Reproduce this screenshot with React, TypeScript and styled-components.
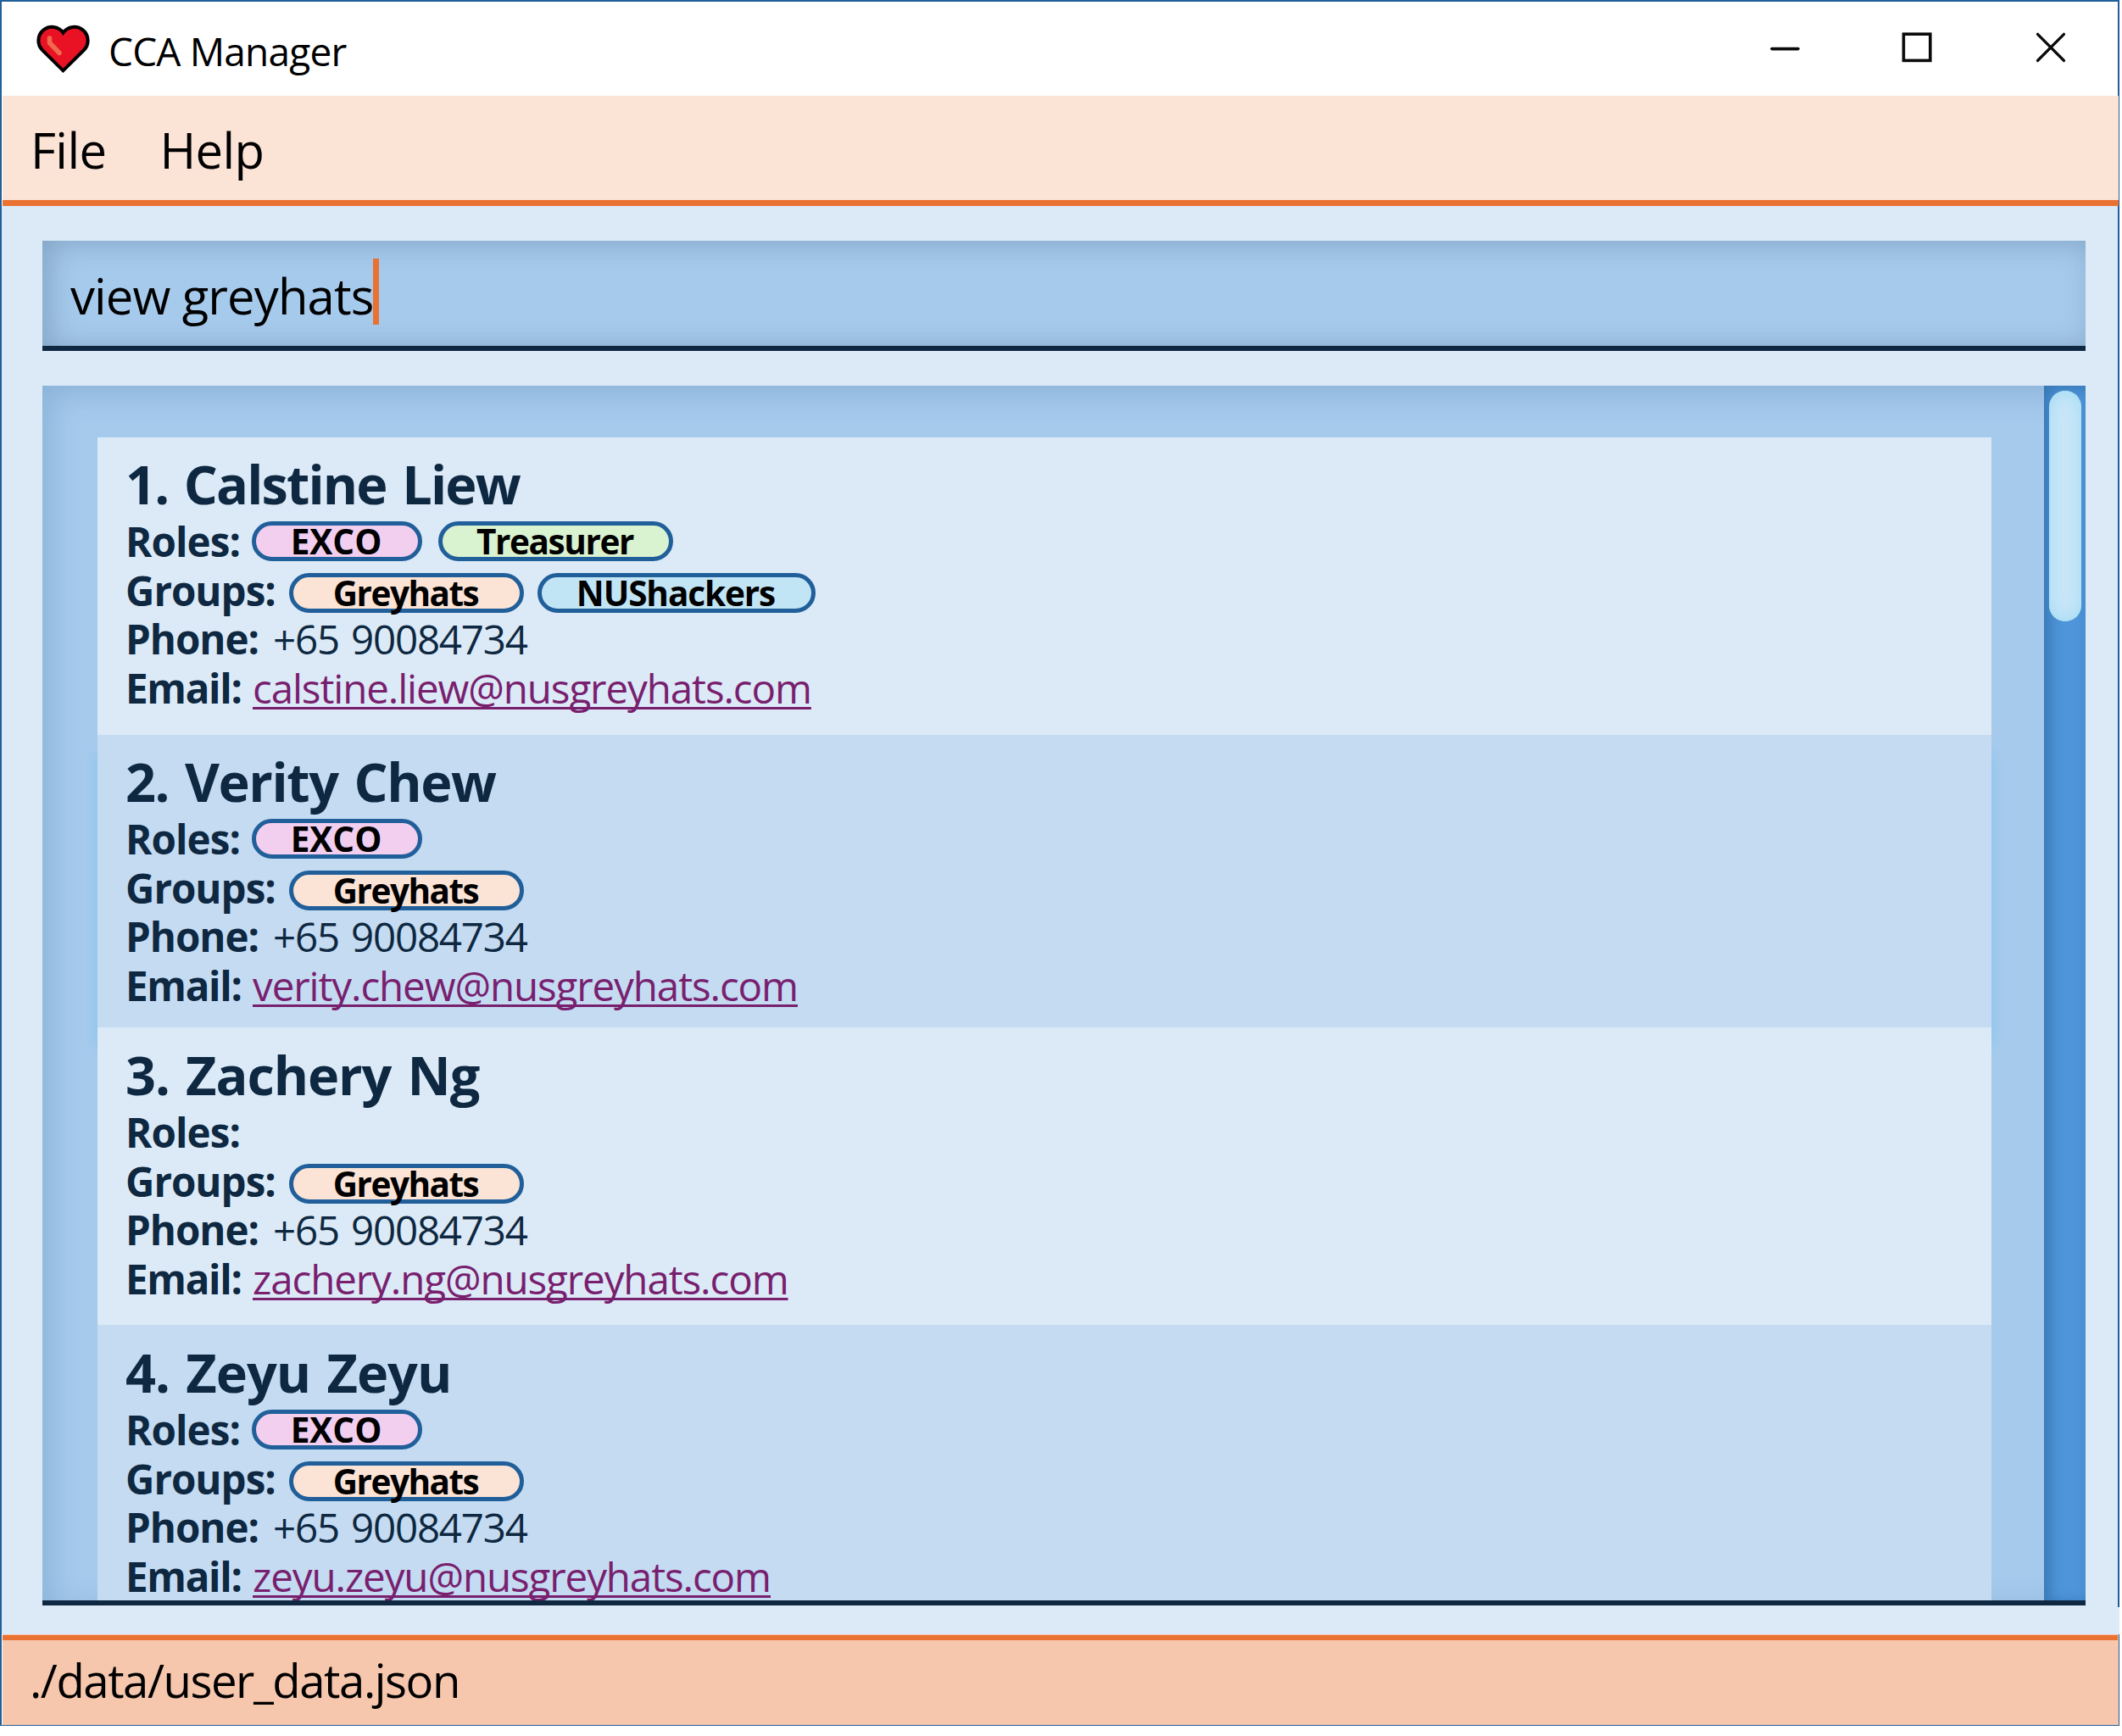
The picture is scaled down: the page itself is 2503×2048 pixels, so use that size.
import React from "react";
import styled, { createGlobalStyle } from "styled-components";

const GlobalStyle = createGlobalStyle`
  *, *::before, *::after { box-sizing: border-box; }
  body { margin: 0; background: #ffffff; font-family: "Open Sans", "Noto Sans", sans-serif; }
`;

const Window = styled.div`
  display: flex;
  flex-direction: column;
  width: 2500px;
  height: 2036px;
  border: 2px solid #215f9a;
  border-bottom-width: 1px;
  background: #ffffff;
  color: #000000;
  white-space: pre;
`;

const TitleBar = styled.header`
  display: flex;
  height: 111px;
  flex: none;
`;

const HeartIcon = styled.svg`
  flex: none;
  width: 64px;
  height: 60px;
  margin: 26px 0 0 40px;
`;

const Title = styled.h1`
  flex: 1;
  margin: 0 0 0 22px;
  padding-top: 3px;
  font-size: 46px;
  font-weight: 400;
  line-height: 111px;
  letter-spacing: -0.8px;
`;

const WindowControls = styled.div`
  display: flex;
  align-items: flex-start;
  gap: 118px;
  padding: 34px 59px 0 0;
`;

const ControlIcon = styled.svg`
  display: block;
  width: 40px;
  height: 40px;
  fill: none;
  stroke: #0a0a0a;
  stroke-linecap: round;
`;

const MenuBar = styled.nav`
  display: flex;
  flex: none;
  gap: 63px;
  height: 130px;
  margin: 0 -1px 0 1px;
  padding-left: 33px;
  border-bottom: 7px solid #e97132;
  background: #fbe3d6;
`;

const MenuItem = styled.span`
  font-size: 58px;
  line-height: 127px;
  letter-spacing: -0.6px;
`;

const Main = styled.main`
  display: flex;
  flex: none;
  flex-direction: column;
  gap: 41px;
  height: 1653px;
  padding: 41px 38px 0 48px;
  background: #dceaf7;
`;

const CommandBox = styled.div`
  display: flex;
  flex: none;
  height: 130px;
  padding-left: 33px;
  border-bottom: 6px solid #0e2841;
  background: #a6caec;
  box-shadow: inset 9px 3px 34px rgba(20, 50, 80, 0.24);
`;

const CommandText = styled.span`
  font-size: 58px;
  line-height: 129px;
  letter-spacing: -0.9px;
`;

const Caret = styled.span`
  width: 7px;
  height: 78px;
  margin-top: 21px;
  background: #e97132;
`;

const ListPanel = styled.section`
  display: flex;
  flex: none;
  height: 1439px;
  border-bottom: 6px solid #0e2841;
  background: #a6caec;
  box-shadow: inset 9px 9px 36px rgba(40, 90, 140, 0.21);
`;

const CardList = styled.div`
  display: flex;
  flex: 1;
  flex-direction: column;
  padding: 61px 62px 0 65px;
  overflow: hidden;
`;

const Card = styled.article<{ $height: number; $shade: boolean; $top: number; $glow: boolean }>`
  position: relative;
  z-index: ${(p) => (p.$glow ? 0 : 1)};
  flex: none;
  height: ${(p) => p.$height}px;
  padding: ${(p) => p.$top}px 0 0 33px;
  background: ${(p) => (p.$shade ? "#c4dbf2" : "#dceaf7")};
  box-shadow: ${(p) => (p.$glow ? "0 22px 16px #84c6ee" : "none")};
  color: #0e2841;
`;

const Name = styled.h2<{ $spacing: number }>`
  height: 77px;
  margin: 0;
  font-size: 63px;
  font-weight: 700;
  line-height: 77px;
  letter-spacing: ${(p) => p.$spacing}px;
  word-spacing: 4px;
`;

const Field = styled.div<{ $height: number }>`
  display: flex;
  height: ${(p) => p.$height}px;
  font-size: 47.5px;
  line-height: 60px;
`;

const Label = styled.span<{ $width: number; $spacing: number }>`
  flex: none;
  width: ${(p) => p.$width}px;
  font-weight: 700;
  letter-spacing: ${(p) => p.$spacing}px;
`;

const Value = styled.span`
  letter-spacing: -1.2px;
  word-spacing: 3px;
`;

const MailLink = styled.a`
  color: #78206e;
  letter-spacing: -1.09px;
  text-decoration: underline;
  text-decoration-thickness: 3px;
  text-decoration-skip-ink: none;
  text-underline-offset: 4px;
`;

const Tags = styled.div<{ $gap: number; $drop: number }>`
  display: flex;
  gap: ${(p) => p.$gap}px;
  padding-top: ${(p) => p.$drop}px;
`;

const Tag = styled.span<{ $color: string; $width: number; $spacing: number }>`
  width: ${(p) => p.$width}px;
  height: 47px;
  padding-right: 2px;
  border: 5px solid #215f9a;
  border-radius: 24px;
  background: ${(p) => p.$color};
  color: #000000;
  font-size: 40.5px;
  font-weight: 700;
  line-height: 37px;
  letter-spacing: ${(p) => p.$spacing}px;
  text-align: center;
`;

const ScrollBar = styled.div`
  flex: none;
  width: 49px;
  padding: 6px 5px 0 6px;
  background: #4e95d9;
  box-shadow: inset 6px 3px 16px rgba(20, 70, 120, 0.4);
`;

const Thumb = styled.div`
  height: 272px;
  border-radius: 19px;
  background: #cce6f9;
  box-shadow: inset 0 0 22px #9cdcf2;
`;

const Divider = styled.div`
  flex: 1;
  margin-right: -2px;
  background: #dceaf7;
`;

const StatusBar = styled.footer`
  flex: none;
  height: 107px;
  margin: 0 -1px 0 1px;
  padding-left: 32px;
  border-top: 1px solid #f6c6ad;
  background: #f6c6ad;
`;

const StatusRule = styled.div`
  height: 6px;
  margin: 0 1px 0 -32px;
  background: #e97132;
`;

const StatusText = styled.span`
  display: block;
  font-size: 54.5px;
  line-height: 94px;
  letter-spacing: -1.45px;
`;

const TAGS: Record<string, { color: string; width: number; spacing: number }> = {
  EXCO: { color: "#f2ceef", width: 201, spacing: 0 },
  Treasurer: { color: "#d9f2d0", width: 277, spacing: -1.4 },
  Greyhats: { color: "#fbe3d6", width: 277, spacing: -1.5 },
  NUShackers: { color: "#c1e5f5", width: 328, spacing: -1.1 },
};

type Person = {
  name: string;
  spacing: number;
  roles: string[];
  groups: string[];
  phone: string;
  email: string;
  height: number;
  top: number;
};

const PEOPLE: Person[] = [
  { name: "Calstine Liew", spacing: -1.87, roles: ["EXCO", "Treasurer"], groups: ["Greyhats", "NUShackers"], phone: "+65 90084734", email: "calstine.liew@nusgreyhats.com", height: 351, top: 16 },
  { name: "Verity Chew", spacing: -1.44, roles: ["EXCO"], groups: ["Greyhats"], phone: "+65 90084734", email: "verity.chew@nusgreyhats.com", height: 345, top: 16 },
  { name: "Zachery Ng", spacing: -1.1, roles: [], groups: ["Greyhats"], phone: "+65 90084734", email: "zachery.ng@nusgreyhats.com", height: 351, top: 17 },
  { name: "Zeyu Zeyu", spacing: -1.03, roles: ["EXCO"], groups: ["Greyhats"], phone: "+65 90084734", email: "zeyu.zeyu@nusgreyhats.com", height: 351, top: 17 },
];

function TagList({ items, gap, drop }: { items: string[]; gap: number; drop: number }) {
  return (
    <Tags $gap={gap} $drop={drop}>
      {items.map((t) => (
        <Tag key={t} $color={TAGS[t].color} $width={TAGS[t].width} $spacing={TAGS[t].spacing}>{t}</Tag>
      ))}
    </Tags>
  );
}

function PersonCard({ person, index }: { person: Person; index: number }) {
  return (
    <Card $height={person.height} $top={person.top} $shade={index % 2 === 1} $glow={index === 1}>
      <Name $spacing={person.spacing}>{`${index + 1}. ${person.name}`}</Name>
      <Field $height={58}>
        <Label $width={149} $spacing={-0.9}>Roles:</Label>
        <TagList items={person.roles} gap={19} drop={6} />
      </Field>
      <Field $height={57}>
        <Label $width={193} $spacing={-1}>Groups:</Label>
        <TagList items={person.groups} gap={16} drop={9} />
      </Field>
      <Field $height={58}>
        <Label $width={174} $spacing={-1.05}>Phone:</Label>
        <Value>{person.phone}</Value>
      </Field>
      <Field $height={58}>
        <Label $width={150} $spacing={-1.3}>Email:</Label>
        <MailLink>{person.email}</MailLink>
      </Field>
    </Card>
  );
}

export default function App() {
  return (
    <>
      <GlobalStyle />
      <Window>
        <TitleBar>
          <HeartIcon viewBox="42 28 64 60">
            <path d="M74.5 83.3 L50.2 59.3 A16 16 0 1 1 74.5 38.7 A16 16 0 1 1 98.8 59.3 Z" fill="#e81224" stroke="#000" strokeWidth="4" />
            <path d="M58.5 45 V50.5 L70 62.5" fill="none" stroke="#f0694d" strokeWidth="5.6" strokeLinecap="round" strokeLinejoin="round" />
          </HeartIcon>
          <Title>CCA Manager</Title>
          <WindowControls>
            <ControlIcon viewBox="0 0 40 40"><path d="M7 21.6H38" strokeWidth="3.6" /></ControlIcon>
            <ControlIcon viewBox="0 0 40 40"><rect x="4.4" y="4.2" width="31.4" height="31.2" strokeWidth="3.6" /></ControlIcon>
            <ControlIcon viewBox="0 0 40 40"><path d="M4.5 4.3L35.5 35.5M35.5 4.3L4.5 35.5" strokeWidth="3.2" /></ControlIcon>
          </WindowControls>
        </TitleBar>
        <MenuBar>
          <MenuItem>File</MenuItem>
          <MenuItem>Help</MenuItem>
        </MenuBar>
        <Main>
          <CommandBox>
            <CommandText>view greyhats</CommandText>
            <Caret />
          </CommandBox>
          <ListPanel>
            <CardList>
              {PEOPLE.map((p, i) => (
                <PersonCard key={p.email} person={p} index={i} />
              ))}
            </CardList>
            <ScrollBar>
              <Thumb />
            </ScrollBar>
          </ListPanel>
        </Main>
        <Divider />
        <StatusBar>
          <StatusRule />
          <StatusText>./data/user_data.json</StatusText>
        </StatusBar>
      </Window>
    </>
  );
}
